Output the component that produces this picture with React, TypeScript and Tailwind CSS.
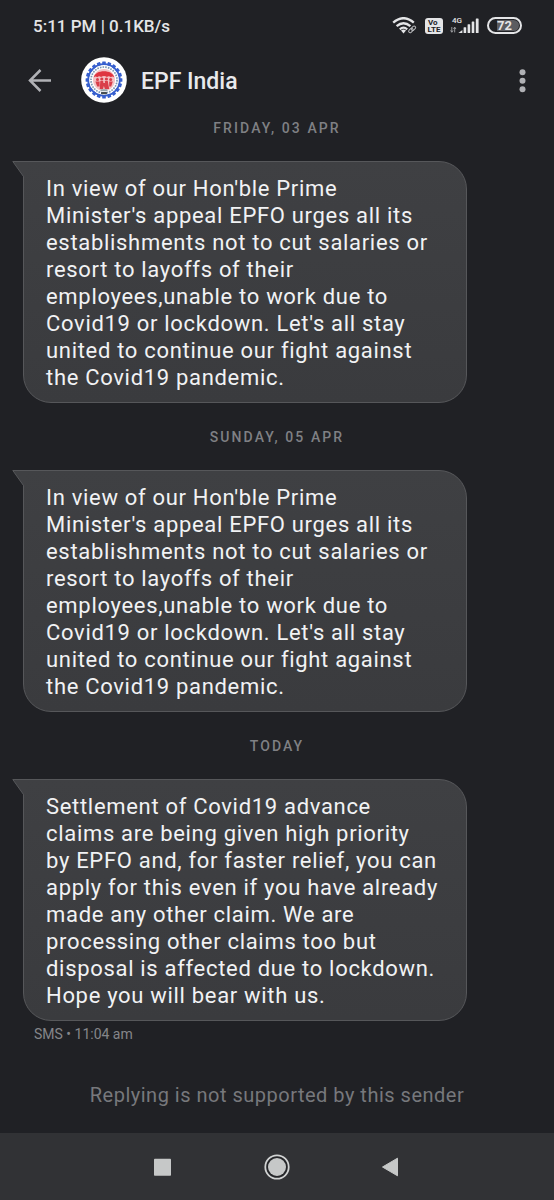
import { Fragment } from 'react';

const teeth = Array.from({ length: 20 }, (_, i) => i * 18);

const appeal =
  "In view of our Hon'ble Prime Minister's appeal EPFO urges all its establishments not to cut salaries or resort to layoffs of their employees,unable to work due to Covid19 or lockdown. Let's all stay united to continue our fight against the Covid19 pandemic.";

const messages = [
  { day: 'Friday, 03 Apr', text: appeal },
  { day: 'Sunday, 05 Apr', text: appeal },
  {
    day: 'Today',
    text: 'Settlement of Covid19 advance claims are being given high priority by\u00a0EPFO and, for faster relief, you can apply for this even if you have already made any other claim. We are processing other claims too but disposal is affected due to lockdown. Hope you will bear with us.',
  },
];

function WifiIcon() {
  return (
    <svg width="26" height="18" viewBox="0 0 26 18" fill="none" stroke="#e4e5e7" aria-hidden="true">
      <path d="M1.2 5.6Q11.5 -3.2 21.8 5.6" strokeWidth="2.4" />
      <path d="M4.6 9.2Q11.5 3.2 18.4 9.2" strokeWidth="2.3" />
      <path d="M7.8 12.4Q11.5 9 15.2 12.4" strokeWidth="2.2" />
      <path d="M9 13.6Q11.5 11.6 14 13.6L11.5 16.6Z" fill="#e4e5e7" stroke="none" />
      <g stroke="#b9babd" strokeWidth="1" transform="rotate(-42 20 12.5)">
        <rect x="16" y="11" width="5" height="3" rx="1.5" />
        <rect x="19.4" y="11" width="5" height="3" rx="1.5" />
      </g>
    </svg>
  );
}

function SignalIcon() {
  return (
    <svg width="30" height="17" viewBox="0 0 30 17" fill="#e4e5e7" aria-hidden="true">
      <path d="M1.8 10v5M0.6 13.4l1.2 1.9 1.2-1.9M4.7 15.4v-5M3.5 12l1.2-1.9L5.9 12" fill="none" stroke="#a5a6a9" strokeWidth="0.9" />
      <path d="M8.4 16l4-3v3z" />
      <rect x="13.6" y="10.2" width="2.6" height="5.8" rx=".6" />
      <rect x="17.6" y="7.2" width="2.6" height="8.8" rx=".6" />
      <rect x="21.7" y="4.5" width="2.6" height="11.5" rx=".6" />
      <rect x="25.8" y="1.4" width="2.8" height="14.6" rx=".6" />
      <text x="2" y="6.4" fontSize="8" fontWeight="500">4G</text>
    </svg>
  );
}

function Emblem() {
  return (
    <svg className="size-[46px]" viewBox="0 0 46 46" role="img" aria-label="EPF India">
      <circle cx="23" cy="23" r="22.8" fill="#fff" />
      <g fill="#365fce">
        {teeth.map((a) => (
          <rect key={a} x="21.2" y="4.6" width="3.6" height="3.4" rx=".5" transform={`rotate(${a} 23 23)`} />
        ))}
      </g>
      <circle cx="23" cy="23" r="15.8" fill="none" stroke="#365fce" strokeWidth="1.8" />
      <circle cx="23" cy="23" r="13" fill="none" stroke="#7c98b3" strokeWidth="1.7" strokeDasharray="1.6 1.1" />
      <circle cx="23" cy="23" r="11" fill="#f3c3c5" />
      <path d="M12.8 20.5C14 12.3 32 12.3 33.2 20.5Q31.5 18.8 29.8 20.3Q27.8 18.4 26 20Q23 18 20 20Q18.2 18.4 16.2 20.3Q14.5 18.8 12.8 20.5Z" fill="#df3540" />
      <g fill="#d93e4a">
        <circle cx="16.5" cy="22.6" r="1.5" />
        <circle cx="20.8" cy="22" r="1.6" />
        <circle cx="25.4" cy="22" r="1.6" />
        <circle cx="29.7" cy="22.6" r="1.5" />
        <path d="M14.4 24.6h4.2v4.8h-2.4zM19.3 24h3l-.4 3 .2 5h-3.4zM23.8 24h3l.6 3.4.8 4.6h-3.4zM28.2 24.6h3.6l-1.6 5h-2z" />
        <path d="M21.5 25.6l3.4.6 1.2 5.8h-2.2l-1-3-1 3h-2.2z" />
      </g>
      <rect x="19.5" y="32.3" width="7" height="2" rx=".5" fill="#98a6ad" />
      <rect x="20" y="35" width="6" height="2.2" rx=".6" fill="#454d52" />
    </svg>
  );
}

function Bubble({ text }: { text: string }) {
  return (
    <div className="relative mr-[87px] ml-[23px] rounded-[28px] rounded-tl-none border border-[#56575a] bg-linear-to-b from-[#3f4043] to-[#3a3b3e] pt-[13px] pr-6 pb-[11px] pl-[22px]">
      <svg className="absolute -top-px -left-3" width="14" height="17" viewBox="0 0 14 17" aria-hidden="true">
        <path d="M14 .5H.8L11.5 15.5V17H14Z" fill="#3f4043" />
        <path d="M14 .5H.8L11.5 15.5V17" fill="none" stroke="#56575a" />
      </svg>
      <p className="text-[22px] leading-[27px] tracking-[0.03125em] text-[#f1f2f4]">{text}</p>
    </div>
  );
}

export default function App() {
  return (
    <div className="flex min-h-screen flex-col bg-[#202125] font-[Roboto,sans-serif]">
      <div className="flex h-[51px] items-center justify-between pr-8 pl-[33px] text-[#e4e5e7]">
        <div className="text-[17px] leading-5 font-medium">5:11 PM | 0.1KB/s</div>
        <div className="flex items-center gap-[7px]">
          <WifiIcon />
          <div className="flex h-4 w-[18px] flex-col items-center justify-center rounded-[3px] bg-[#e4e5e7] text-[8px] leading-[7px] font-bold text-[#202125]">
            <span className="self-start pl-[3px]">Vo</span>
            <span>LTE</span>
          </div>
          <SignalIcon />
          <div className="flex h-[17px] w-[35px] items-center rounded-full border-2 border-[#e4e5e7] p-px">
            <div className="flex h-full flex-1 items-center justify-center rounded-full bg-linear-to-r from-[#202125] from-25% to-[#5b5c60] to-25% text-[13px] leading-3 font-bold">72</div>
          </div>
        </div>
      </div>

      <header className="flex h-[69px] items-start pr-[22px] pl-7">
        <button type="button" aria-label="Back" className="mt-[17px] text-[#b0b1b5]">
          <svg width="24" height="24" viewBox="0 0 24 24" fill="none" stroke="currentColor" strokeWidth="2.5" aria-hidden="true">
            <path d="M23 12.5H2M12.5 2L2 12.5L12.5 23" />
          </svg>
        </button>
        <div className="mt-1.5 ml-[29px]">
          <Emblem />
        </div>
        <h1 className="mt-[17px] ml-3.5 text-[23px] leading-7 font-medium text-[#e8e9ec]">EPF India</h1>
        <button type="button" aria-label="More options" className="mt-[17px] ml-auto text-[#b0b1b5]">
          <svg width="20" height="26" viewBox="0 0 20 26" fill="currentColor" aria-hidden="true">
            <circle cx="10.5" cy="4.2" r="3" />
            <circle cx="10.5" cy="12.7" r="3" />
            <circle cx="10.5" cy="21.2" r="3" />
          </svg>
        </button>
      </header>

      <main className="flex-1">
        {messages.map((m) => (
          <Fragment key={m.day}>
            <h2 className="mb-[25px] text-center text-sm leading-4 font-medium tracking-[0.15em] text-[#7f8084] uppercase">{m.day}</h2>
            <div className="mb-[26px] last-of-type:mb-0">
              <Bubble text={m.text} />
            </div>
          </Fragment>
        ))}
        <p className="mt-[5px] ml-[34px] text-sm leading-4 text-[#85868a]">SMS • 11:04 am</p>
        <p className="mt-[39px] mb-6 text-center text-xl leading-7 tracking-wide text-[#77787c]">Replying is not supported by this sender</p>
      </main>

      <nav aria-label="System navigation" className="flex h-[67px] items-center justify-center gap-[88px] bg-[#313235]">
        <button type="button" aria-label="Recent apps">
          <svg width="26" height="26" viewBox="0 0 26 26" aria-hidden="true">
            <rect x="4" y="4.8" width="17" height="17" rx=".8" fill="#c6c8c8" />
          </svg>
        </button>
        <button type="button" aria-label="Home">
          <svg width="26" height="26" viewBox="0 0 26 26" aria-hidden="true">
            <circle cx="13" cy="13" r="11.7" fill="#252629" stroke="#d1d3d3" strokeWidth="1.8" />
            <circle cx="13" cy="13" r="9" fill="#c6c8c8" />
          </svg>
        </button>
        <button type="button" aria-label="Go back">
          <svg width="26" height="26" viewBox="0 0 26 26" aria-hidden="true">
            <path d="M4.5 13L19.5 4.2V21.8Z" fill="#c6c8c8" stroke="#c6c8c8" strokeLinejoin="round" />
          </svg>
        </button>
      </nav>
    </div>
  );
}
